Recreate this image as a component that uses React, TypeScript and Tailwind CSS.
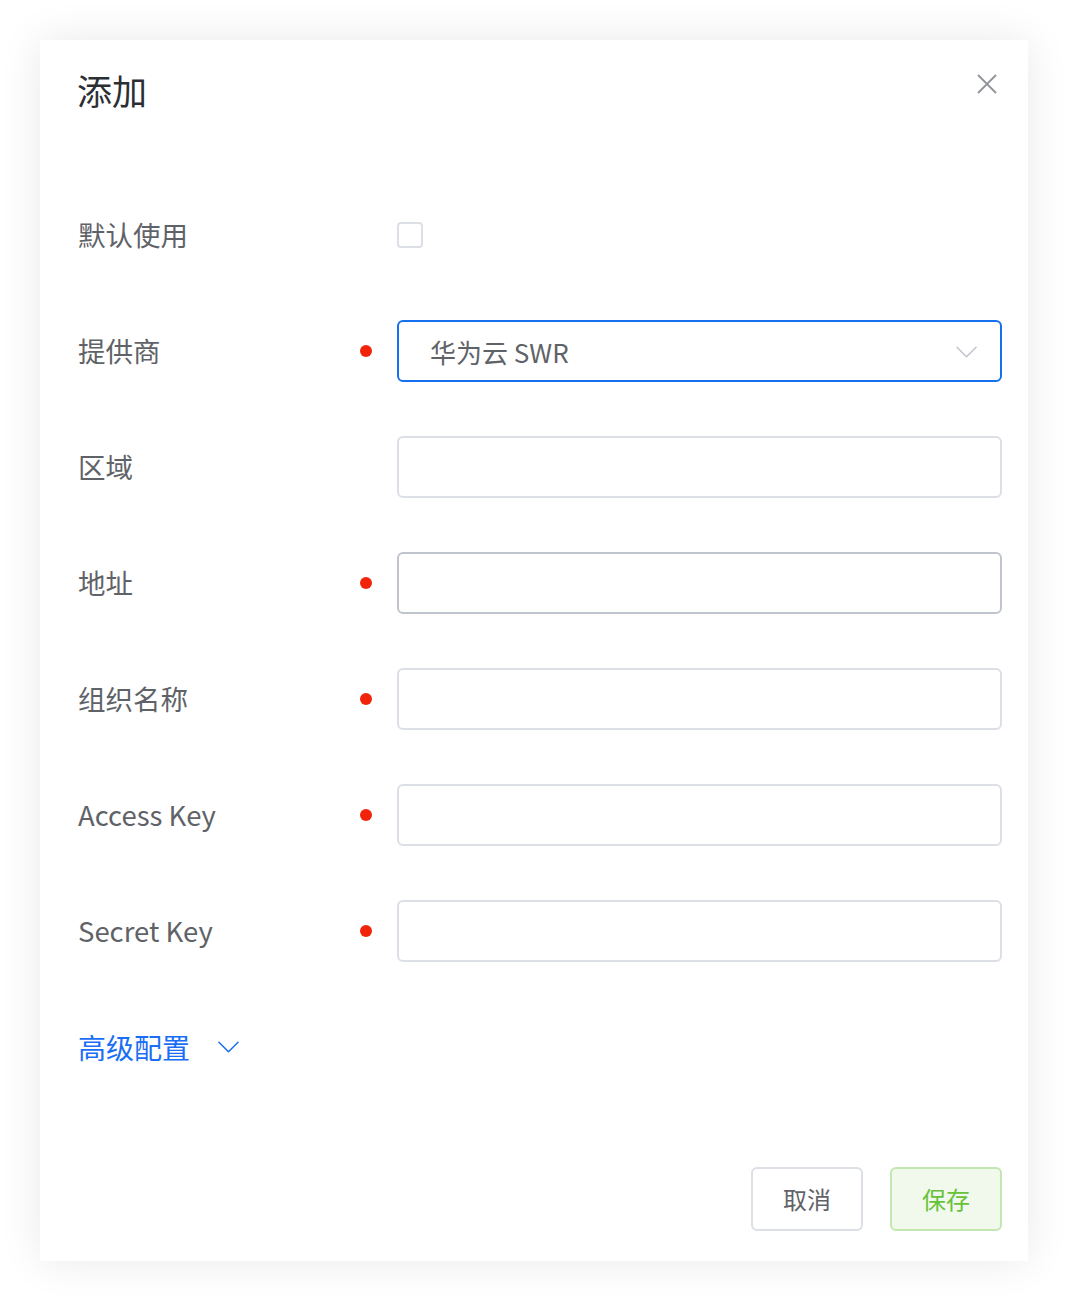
import { useState } from 'react';

const FONT = '"Noto Sans CJK SC", "Noto Sans", sans-serif';

const fields = [
  { label: '提供商', required: true, kind: 'select' },
  { label: '区域', required: false, kind: 'input' },
  { label: '地址', required: true, kind: 'input', hover: true },
  { label: '组织名称', required: true, kind: 'input' },
  { label: 'Access Key', required: true, kind: 'input' },
  { label: 'Secret Key', required: true, kind: 'input' },
];

function Chevron({ className }: { className?: string }) {
  return (
    <svg viewBox="0 0 22 12" className={className} fill="none" stroke="currentColor" strokeWidth="1.6" strokeLinecap="round" strokeLinejoin="round">
      <path d="M1 1l10 10L21 1" />
    </svg>
  );
}

function FormRow({ label, required, children }: { label: string; required?: boolean; children: React.ReactNode }) {
  return (
    <div className="flex items-center h-[62px]">
      <div className="w-[282px] text-[27.5px] text-[#5f6368]">{label}</div>
      <div className="w-[12px] flex justify-center">
        {required && <span className="block w-[12px] h-[12px] rounded-full bg-[#f0240a]" />}
      </div>
      <div className="flex-1 ml-[25px] flex items-center">{children}</div>
    </div>
  );
}

export default function App() {
  const [isDefault, setIsDefault] = useState(false);

  return (
    <div className="min-h-[1302px] bg-white p-[40px]" style={{ fontFamily: FONT }}>
      <div className="w-[988px] bg-white shadow-[0_0_40px_rgba(0,0,0,0.09)] pl-[38px] pr-[26px] pt-[26px] pb-[30px]">
        {/* Header */}
        <div className="flex items-center justify-between h-[48px]">
          <h1 className="text-[35px] text-[#2b2f33] leading-[48px] -ml-[1px]">添加</h1>
          <button className="w-[20px] h-[20px] text-[#909399] mr-[5px] -mt-[12px]">
            <svg viewBox="0 0 20 20" className="w-[20px] h-[20px]" fill="none" stroke="currentColor" strokeWidth="1.8">
              <path d="M1 1l18 18M19 1L1 19" />
            </svg>
          </button>
        </div>

        {/* Body */}
        <div className="mt-[90px] space-y-[54px]">
          <FormRow label="默认使用">
            <button
              onClick={() => setIsDefault(!isDefault)}
              className="w-[26px] h-[26px] rounded-[4px] border-2 border-[#dcdfe6] bg-white"
            />
          </FormRow>

          {fields.map((f) => (
            <FormRow key={f.label} label={f.label} required={f.required}>
              {f.kind === 'select' ? (
                <div className="w-full h-[62px] rounded-[6px] border-2 border-[#1570ef] flex items-center justify-between pl-[31px] pr-[23px]">
                  <span className="text-[26px] text-[#5f6368]">华为云 SWR</span>
                  <Chevron className="w-[21px] h-[12px] text-[#c0c4cc] mt-[2px]" />
                </div>
              ) : (
                <div
                  className={`w-full h-[62px] rounded-[6px] border-2 ${f.hover ? 'border-[#c0c4cc]' : 'border-[#dcdfe6]'}`}
                />
              )}
            </FormRow>
          ))}

          <div className="flex items-center h-[62px] text-[#1a6ef5]">
            <span className="text-[28px]">高级配置</span>
            <Chevron className="ml-[28px] w-[21px] h-[12px]" />
          </div>
        </div>

        {/* Footer */}
        <div className="mt-[89px] flex justify-end gap-[27px]">
          <button className="w-[112px] h-[64px] rounded-[6px] border-2 border-[#dcdfe6] bg-white text-[24px] text-[#5f6368]">
            取消
          </button>
          <button className="w-[112px] h-[64px] rounded-[6px] border-2 border-[#c2e7b0] bg-[#f0f9eb] text-[24px] text-[#67c23a]">
            保存
          </button>
        </div>
      </div>
    </div>
  );
}
